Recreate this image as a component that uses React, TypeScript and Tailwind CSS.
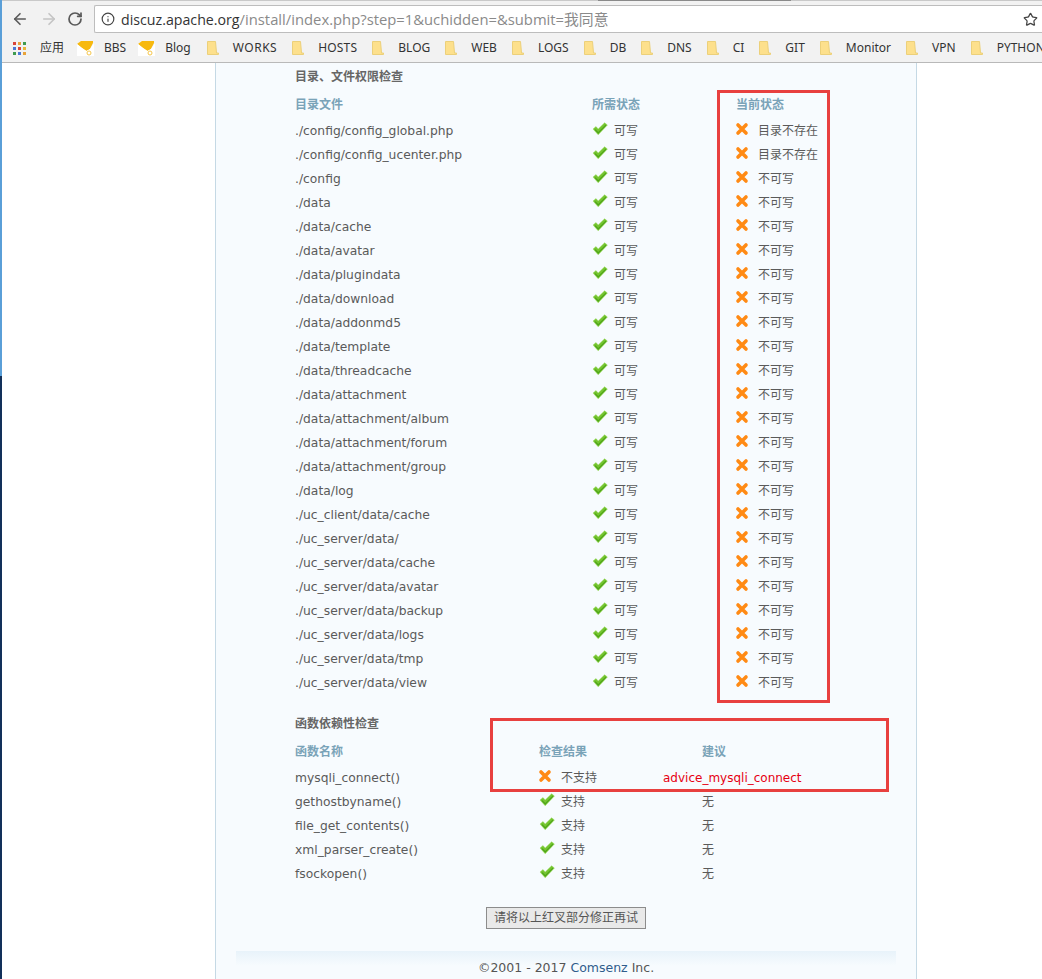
import { ArrowLeft, ArrowRight, Info, RotateCw, Star } from 'lucide-react';

const bodyFont = { fontFamily: '"Noto Sans", "Noto Sans CJK SC", sans-serif' };
const pathFont = { fontFamily: '"DejaVu Sans", "Noto Sans CJK SC", sans-serif' };

const dirs = [
  './config/config_global.php',
  './config/config_ucenter.php',
  './config',
  './data',
  './data/cache',
  './data/avatar',
  './data/plugindata',
  './data/download',
  './data/addonmd5',
  './data/template',
  './data/threadcache',
  './data/attachment',
  './data/attachment/album',
  './data/attachment/forum',
  './data/attachment/group',
  './data/log',
  './uc_client/data/cache',
  './uc_server/data/',
  './uc_server/data/cache',
  './uc_server/data/avatar',
  './uc_server/data/backup',
  './uc_server/data/logs',
  './uc_server/data/tmp',
  './uc_server/data/view',
];

const funcs = ['mysqli_connect()', 'gethostbyname()', 'file_get_contents()', 'xml_parser_create()', 'fsockopen()'];

const bookmarks = ['WORKS', 'HOSTS', 'BLOG', 'WEB', 'LOGS', 'DB', 'DNS', 'CI', 'GIT', 'Monitor', 'VPN', 'PYTHON'];

function CheckIcon() {
  return (
    <svg width="16" height="14" viewBox="0 0 16 14" className="shrink-0">
      <path d="M1 7 L4 4.6 L6.2 7 L12.6 0.8 L15.4 3 L6.2 12.8 Z" fill="#74c52f" stroke="#9ad860" strokeWidth="0.5" />
      <path d="M3 7.6 L6.2 11 L14 3.2" fill="none" stroke="#4fa31b" strokeWidth="1.2" />
    </svg>
  );
}

function CrossIcon() {
  return (
    <svg width="14" height="14" viewBox="0 0 14 14" className="shrink-0">
      <path d="M3 3 L11 11 M11 3 L3 11" stroke="#ff8a14" strokeWidth="3.6" strokeLinecap="round" />
    </svg>
  );
}

function Folder() {
  return (
    <svg width="12" height="14" viewBox="0 0 12 14" className="shrink-0">
      <path d="M0.5 0.5 H8.5 L9.5 12 H11.5 V13.5 H0.5 Z" fill="#fde08c" stroke="#ecd07a" />
    </svg>
  );
}

function Bell() {
  return (
    <svg width="17" height="17" viewBox="0 0 17 17" className="shrink-0">
      <path d="M0 4 L4 1 H16 V3 L13 9 L9.5 11 L5 8 Z" fill="#f7b90f" />
      <path d="M0 4 V16 H17 V3 L13 9 L9.5 11 L5 8 Z" fill="#fff" />
      <circle cx="12" cy="13" r="2" fill="none" stroke="#f5c64a" />
    </svg>
  );
}

function AppsGrid() {
  const colors = ['#d9453a', '#e8a33a', '#3f9b4f', '#4a78d6', '#d9453a', '#e8b83a', '#3f9b4f', '#4a78d6', '#e8a33a'];
  return (
    <div className="grid grid-cols-3 gap-[2px] w-[13px] shrink-0">
      {colors.map((c, i) => (
        <span key={i} className="w-[3px] h-[3px]" style={{ backgroundColor: c }} />
      ))}
    </div>
  );
}

function Status({ ok, label, width }: { ok: boolean; label: string; width: string }) {
  return (
    <div className={`flex items-center ${width}`}>
      <span className={`-mt-[5px] w-[22px] flex ${ok ? '' : '-ml-[1px]'}`}>{ok ? <CheckIcon /> : <CrossIcon />}</span>
      <span className={ok ? '' : 'ml-[1px]'}>{label}</span>
    </div>
  );
}

export default function App() {
  return (
    <div className="relative h-[979px] w-[1042px] overflow-hidden bg-white text-[12px] text-[#5a5a5a]" style={bodyFont}>
      {/* Browser chrome */}
      <div className="h-[63px] bg-[#f2f2f2] border-b border-[#b9b9b9]">
        <div className="flex h-[1px] bg-[#c9c9c9]">
          <div className="ml-[598px] w-[193px] bg-[#8a8a8a]" />
        </div>
        <div className="flex items-center h-[32px] pt-[4px]">
          <ArrowLeft className="ml-[11px] w-[18px] h-[18px] text-[#5a5a5a] shrink-0" strokeWidth={2.2} />
          <ArrowRight className="ml-[11px] w-[18px] h-[18px] text-[#c4c4c4] shrink-0" strokeWidth={2.2} />
          <RotateCw className="ml-[9px] w-[16px] h-[16px] text-[#5a5a5a] shrink-0" strokeWidth={2.6} />
          <div className="ml-[11px] flex items-center h-[28px] flex-1 bg-white border border-r-0 border-[#bdbdbd] rounded-l-[2px]">
            <Info className="ml-[6px] w-[14px] h-[14px] text-[#444] shrink-0" strokeWidth={2} />
            <span className="ml-[6px] text-[14.8px] text-[#8a8a8a] whitespace-nowrap" style={{ fontFamily: '"Open Sans", "Noto Sans CJK SC", sans-serif' }}>
              <span className="text-[14.2px] text-[#333]">discuz.apache.org</span>/install/index.php?step=1&uchidden=&submit=我同意
            </span>
            <Star className="ml-auto mr-[4px] w-[15px] h-[15px] text-[#444] shrink-0" strokeWidth={2} />
          </div>
        </div>
        <div className="flex items-center h-[29px] pl-[13px] pt-[1px] text-[#333] whitespace-nowrap">
          <AppsGrid />
          <span className="ml-[14px]">应用</span>
          <span className="ml-[13px]"><Bell /></span>
          <span className="ml-[10px]">BBS</span>
          <span className="ml-[12px]"><Bell /></span>
          <span className="ml-[10px]">Blog</span>
          {bookmarks.map((b, i) => (
            <div key={b} className={`flex items-center gap-[14px] ${i === 0 ? 'ml-[16px]' : 'ml-[15px]'}`}>
              <Folder />
              <span className={b === 'WORKS' ? 'tracking-[0.5px]' : b === 'HOSTS' ? 'tracking-[0.2px]' : ''}>{b}</span>
            </div>
          ))}
        </div>
      </div>

      {/* Page panel */}
      <div className="ml-[215px] w-[702px] h-[916px] bg-[#f7fbfe] border-x border-[#c5d9e5] pl-[79px]">
        <div className="pt-[5px] h-[28px] font-bold leading-[18px] text-[#666]">目录、文件权限检查</div>
        <div className="flex items-center h-[24px] mt-[2px] font-bold text-[#7aa3b8]">
          <div className="w-[297px]">目录文件</div>
          <div className="w-[144px]">所需状态</div>
          <div>当前状态</div>
        </div>
        {dirs.map((d, i) => (
          <div key={d} className={`flex items-center h-[24px] ${i === 0 ? 'mt-[2px]' : ''}`}>
            <div className="w-[297px] text-[12.3px] pt-[1px]" style={pathFont}>{d}</div>
            <Status ok label="可写" width="w-[144px]" />
            <Status ok={false} label={i < 2 ? '目录不存在' : '不可写'} width="" />
          </div>
        ))}

        <div className="mt-[17px] h-[24px] font-bold leading-[24px] text-[#666]">函数依赖性检查</div>
        <div className="flex items-center h-[24px] mt-[4px] font-bold text-[#7aa3b8]">
          <div className="w-[244px]">函数名称</div>
          <div className="w-[163px]">检查结果</div>
          <div>建议</div>
        </div>
        {funcs.map((f, i) => (
          <div key={f} className={`flex items-center h-[24px] ${i === 0 ? 'mt-[2px]' : ''}`}>
            <div className="w-[244px] text-[12.3px] pt-[1px]" style={pathFont}>{f}</div>
            <Status ok={i > 0} label={i > 0 ? '支持' : '不支持'} width="w-[163px]" />
            {i === 0 ? (
              <div className="-ml-[39px] text-[12px] text-[#e60012]" style={pathFont}>advice_mysqli_connect</div>
            ) : (
              <div>无</div>
            )}
          </div>
        ))}

        <div className="mt-[21px] ml-[191px]">
          <button className="w-[160px] h-[22px] bg-[#e9e9e9] border border-[#8c8c8c] text-[#555] leading-none">请将以上红叉部分修正再试</button>
        </div>

        <div className="-ml-[59px] mt-[22px] w-[660px] h-[15px] bg-gradient-to-b from-[#e8f3fa] to-[#f7fbfe]" />
        <div className="-ml-[59px] -mt-[7px] w-[660px] text-center text-[12.5px] leading-[18px] text-[#555]" style={pathFont}>
          ©2001 - 2017 <span className="text-[#2f5d8c]">Comsenz</span> Inc.
        </div>
      </div>

      {/* Red annotation boxes */}
      <div className="absolute left-[717px] top-[90px] w-[113px] h-[613px] border-[3px] border-[#e8403f]" />
      <div className="absolute left-[490px] top-[718px] w-[399px] h-[74px] border-[3px] border-[#e8403f]" />

      {/* Window edge left over from the capture */}
      <div className="absolute left-0 top-0 w-[2px] h-[376px] bg-[#5a9fd8]" />
      <div className="absolute left-0 top-[376px] w-[2px] h-[603px] bg-[#12305a]" />
    </div>
  );
}
